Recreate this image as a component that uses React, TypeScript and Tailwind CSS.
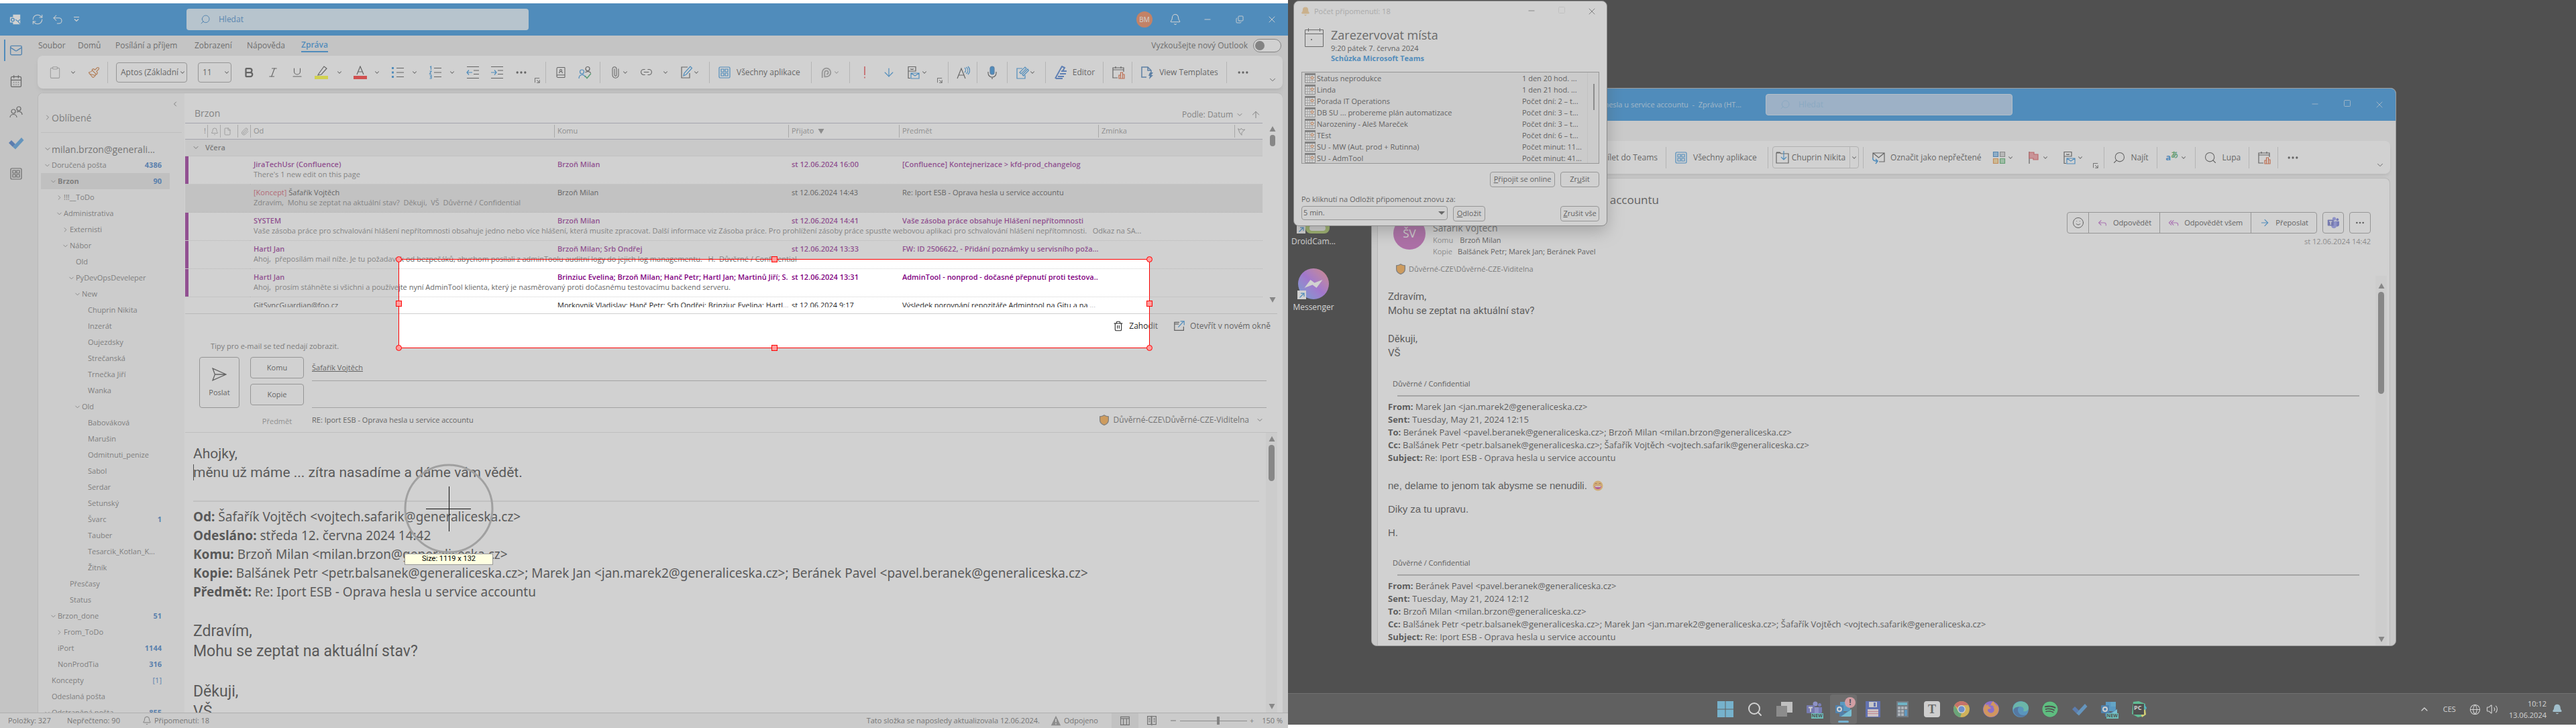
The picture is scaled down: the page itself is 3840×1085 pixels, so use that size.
import React from "react";
import {
  Bell, Bold, Italic, Underline, ChevronDown, ChevronRight, ChevronLeft, ChevronUp, Search, RefreshCw, Undo2, Minus, X, Square, Copy,
  Mail, CalendarDays, Ellipsis, Paperclip, Link2, Mic, Trash2, ArrowUp, ArrowDown, ArrowRight,
  Reply, ReplyAll, Smile, Clipboard, Paintbrush, BookUser, Volume2, Globe, File,
} from "lucide-react";
import { FaFirefoxBrowser, FaSpotify } from "react-icons/fa";

type P = { children?: React.ReactNode; className?: string };

const Svg = ({ children, className = "size-5" }: P) => (
  <svg viewBox="0 0 20 20" fill="none" stroke="currentColor" strokeWidth="1.2" className={`shrink-0 ${className}`} aria-hidden="true">{children}</svg>
);

const Ib = ({ children, className = "", label }: P & { label: string }) => (
  <button aria-label={label} className={`flex size-5 shrink-0 items-center justify-center ${className}`}>{children}</button>
);
const Chev = ({ className = "" }: P) => (
  <button aria-label="Další možnosti" className={`flex w-2.5 shrink-0 items-center justify-center ${className}`}><ChevronDown className="size-2.5" strokeWidth={2.5} /></button>
);
const Div = ({ className = "" }: P) => <span className={`h-8 w-px shrink-0 bg-[#c8c8c8] ${className}`} />;
const Launcher = ({ className = "" }: P) => (
  <button aria-label="Dialogové okno" className={`mb-2 shrink-0 self-end ${className}`}><Svg className="size-2"><path strokeWidth="2.4" d="M1 18V1h17M8 8l10 10M18 8v10H8" /></Svg></button>
);

const AppsIcon = ({ className = "size-5 text-[#0078d4]" }: P) => (
  <Svg className={className}><rect x="2" y="2" width="16" height="16" rx="1.5" /><path d="M5 5h4v4H5zM11 5h4v4h-4zM5 11h4v4H5zM11 11h4v4h-4z" /></Svg>
);
const FileMail = () => (
  <Svg><path d="M13 1.500H3v17h3M3 8h11V1.500h-3M7 4v1.500h3V4" /><path stroke="#0078d4" fill="#fff" d="M7 11h12v8H7zM7 11l6 4 6-4" /></Svg>
);
const CalChart = () => (
  <Svg><path d="M9 18H2V3h16v6M2 6h16M6 1v3M14 1v3" /><path stroke="#d83b01" d="M11 19v-5h2.500v5zM13.500 19v-9h3v9zM16.500 19v-6h2.500v6z" /></Svg>
);
const Shield = () => (
  <Svg className="size-4"><path fill="#f7941d" stroke="#5b5b5b" strokeWidth="1.5" d="M10 1c3 2 5 2.500 8 2.500V10c0 5-4 8-8 9.500C6 18 2 15 2 10V3.500C5 3.500 7 3 10 1z" /></Svg>
);
const TodoIcon = ({ className = "size-6" }: P) => (
  <svg viewBox="0 0 24 24" className={className} aria-hidden="true"><path fill="#185abd" d="M1 12l4-4 6 6-4 4z" /><path fill="#2b88d8" d="M7 18L20 4l3.500 4L11 21.500z" /></svg>
);
const ScrollTri = ({ down = false }: { down?: boolean }) => (
  <Svg className="size-2.5"><path fill="#6e6e6e" stroke="none" d={down ? "M1 2h18l-9 16z" : "M1 18h18L10 2z"} /></Svg>
);

/* ------------------------------------------------------------------ mail window */

const folders: { n: string; l: number; c?: string; o?: boolean }[] = [
  { n: "Doručená pošta", l: 0, c: "4386", o: true }, { n: "Brzon", l: 1, c: "90", o: true }, { n: "!!!__ToDo", l: 2, o: false },
  { n: "Administrativa", l: 2, o: true }, { n: "Externisti", l: 3, o: false }, { n: "Nábor", l: 3, o: true }, { n: "Old", l: 4 },
  { n: "PyDevOpsDeveleper", l: 4, o: true }, { n: "New", l: 5, o: true }, { n: "Chuprin Nikita", l: 6 }, { n: "Inzerát", l: 6 },
  { n: "Oujezdsky", l: 6 }, { n: "Strečanská", l: 6 }, { n: "Trnečka Jiří", l: 6 }, { n: "Wanka", l: 6 }, { n: "Old", l: 5, o: true },
  { n: "Babováková", l: 6 }, { n: "Marušin", l: 6 }, { n: "Odmitnuti_penize", l: 6 }, { n: "Sabol", l: 6 }, { n: "Serdar", l: 6 },
  { n: "Setunský", l: 6 }, { n: "Švarc", l: 6, c: "1" }, { n: "Tauber", l: 6 }, { n: "Tesarcik_Kotlan_K...", l: 6 }, { n: "Žitník", l: 6 },
  { n: "Přesčasy", l: 3 }, { n: "Status", l: 3 }, { n: "Brzon_done", l: 1, c: "51", o: true }, { n: "From_ToDo", l: 2, o: false },
  { n: "iPort", l: 1, c: "1144" }, { n: "NonProdTia", l: 1, c: "316" }, { n: "Koncepty", l: 0, c: "[1]" }, { n: "Odeslaná pošta", l: 0 },
  { n: "Odstraněná pošta", l: 0, c: "855", o: true },
];
const indent = ["pl-1", "pl-[13px]", "pl-[22px]", "pl-[31px]", "pl-10", "pl-[49px]", "pl-[58px]"];

const mails = [
  { from: "JiraTechUsr (Confluence)", to: "Brzoň Milan", at: "st 12.06.2024 16:00", sub: "[Confluence] Kontejnerizace > kfd-prod_changelog", pre: "There's 1 new edit on this page", unread: true },
  { from: "Šafařík Vojtěch", draft: true, to: "Brzoň Milan", at: "st 12.06.2024 14:43", sub: "Re: Iport ESB - Oprava hesla u service accountu", pre: "Zdravím,  Mohu se zeptat na aktuální stav?  Děkuji,  VŠ  Důvěrné / Confidential", unread: false },
  { from: "SYSTEM", to: "Brzoň Milan", at: "st 12.06.2024 14:41", sub: "Vaše zásoba práce obsahuje Hlášení nepřítomnosti", pre: "Vaše zásoba práce pro schvalování hlášení nepřítomnosti obsahuje jedno nebo více hlášení, která musíte zpracovat. Další informace viz Zásoba práce. Pro prohlížení zásoby práce spusťte webovou aplikaci pro schvalování hlášení nepřítomnosti.   Odkaz na SA...", unread: true },
  { from: "Hartl Jan", to: "Brzoň Milan; Srb Ondřej", at: "st 12.06.2024 13:33", sub: "FW: ID 2506622, - Přidání poznámky u servisního poža...", pre: "Ahoj,  přeposílám mail níže. Je tu požadavek od bezpečáků, abychom posílali z adminToolu auditní logy do jejich log managementu.   H.  Důvěrné / Confidential", unread: true },
  { from: "Hartl Jan", to: "Brinziuc Evelina; Brzoň Milan; Hanč Petr; Hartl Jan; Martinů Jiří; S...", at: "st 12.06.2024 13:31", sub: "AdminTool - nonprod - dočasné přepnutí proti testova...", pre: "Ahoj,  prosím stáhněte si všichni a používejte nyní AdminTool klienta, který je nasměrovaný proti dočasnému testovacímu backend serveru.", unread: true },
  { from: "GitSyncGuardian@foo.cz", to: "Morkovnik Vladislav; Hanč Petr; Srb Ondřej; Brinziuc Evelina; Hartl...", at: "st 12.06.2024 9:17", sub: "Výsledek porovnání repozitáře Admintool na Gitu a na ...", pre: "", unread: false },
];

const MailTitleBar = () => (
  <header className="flex h-12 shrink-0 items-center bg-[#0078d4] text-white">
    <div className="flex w-[278px] items-center pl-3.5">
      <Svg className="size-[18px]"><path fill="#fff" stroke="none" d="M6 2h12v16H6v-3h-5V6h5z" /><circle cx="5.500" cy="10.500" r="2.500" stroke="#0078d4" strokeWidth="1.6" /><path stroke="#0078d4" d="M10 10l4 3 4-3M14 13l4 5" /></Svg>
      <Ib label="Odeslat a přijmout" className="ml-3.5"><RefreshCw className="size-[18px]" strokeWidth={1.4} /></Ib>
      <Ib label="Zpět" className="ml-2.5"><Undo2 className="size-[18px]" strokeWidth={1.4} /></Ib>
      <Ib label="Přizpůsobit" className="ml-2"><Svg className="size-2.5"><path strokeWidth="2.4" d="M2 3h16M4 9l6 6 6-6" /></Svg></Ib>
    </div>
    <label className="flex h-8 w-[510px] items-center rounded bg-[#cbe5f7] pl-5 text-[#0f6cbd]">
      <Search className="size-4 -scale-x-100" strokeWidth={1.5} />
      <input aria-label="Hledat" placeholder="Hledat" className="ml-3 min-w-0 flex-1 bg-transparent text-[12px] outline-none placeholder:text-[#0f6cbd]" />
    </label>
    <div className="ml-auto flex items-center">
      <button className="mr-2.5 flex size-6 items-center justify-center rounded-full bg-[#e3642d] text-[10px]">BM</button>
      <button aria-label="Oznámení" className="flex w-12 justify-center"><Bell className="size-[18px]" strokeWidth={1.4} /></button>
      <button aria-label="Minimalizovat" className="flex w-12 justify-center"><Minus className="size-3.5" strokeWidth={1.6} /></button>
      <button aria-label="Obnovit" className="flex w-12 justify-center"><Copy className="size-3 -scale-y-100" strokeWidth={1.8} /></button>
      <button aria-label="Zavřít" className="flex w-12 justify-center"><X className="size-4" strokeWidth={1.4} /></button>
    </div>
  </header>
);

const Rail = () => (
  <nav className="flex w-14 shrink-0 flex-col gap-[18px] pt-2 text-[#333]">
    <button aria-label="Pošta" className="flex h-7 items-center gap-1.5 pl-1.5 text-[#0f6cbd]"><span className="h-8 w-0.5 bg-[#0078d4]" /><Mail className="size-5" strokeWidth={1.7} /></button>
    <button aria-label="Kalendář" className="flex h-7 items-center pl-3.5"><CalendarDays className="size-5" strokeWidth={1.5} /></button>
    <button aria-label="Lidé" className="flex h-7 items-center pl-3.5"><Svg><circle cx="6" cy="9" r="3" /><circle cx="14" cy="5" r="3" /><path d="M1 18c0-6 10-6 10 0M11 10c4-2 8 0 8 4" /></Svg></button>
    <button aria-label="To Do" className="flex h-7 items-center pl-3"><TodoIcon className="size-6" /></button>
    <button aria-label="Aplikace" className="flex h-7 items-center pl-3.5"><AppsIcon className="size-5" /></button>
  </nav>
);

const Combo = ({ value, className, label }: { value: string; className: string; label: string }) => (
  <div className={`relative shrink-0 ${className}`}>
    <select aria-label={label} className="h-[30px] w-full appearance-none rounded border border-[#8a8a8a] bg-white pr-3 pl-1.5 text-[12px]"><option>{value}</option></select>
    <ChevronDown className="pointer-events-none absolute top-2.5 right-0.5 size-2.5 bg-white" strokeWidth={2.5} />
  </div>
);

const listLines = "M8 3.500h11M8 10h11M8 16.500h11";

const MailRibbon = () => (
  <div className="mr-2 flex h-[49px] shrink-0 items-center rounded-lg bg-white text-[12px] text-[#2b2b2b] shadow-md">
    <Ib label="Vložit" className="ml-4 text-[#9a9a9a]"><Clipboard className="size-5" strokeWidth={1.3} /></Ib><Chev className="ml-3" />
    <Ib label="Kopírovat formát" className="ml-4 text-[#c5651c]"><Paintbrush className="size-[18px]" strokeWidth={1.6} /></Ib><Div className="ml-2.5" />
    <Combo label="Písmo" value="Aptos (Základní text)" className="ml-3 w-[106px]" /><Combo label="Velikost písma" value="11" className="ml-4 w-[50px]" />
    <Ib label="Tučné" className="ml-4"><Bold className="size-[18px]" strokeWidth={3} /></Ib>
    <Ib label="Kurzíva" className="ml-4"><Italic className="size-[18px]" strokeWidth={1.5} /></Ib>
    <Ib label="Podtržené" className="ml-4"><Underline className="size-[18px]" strokeWidth={1.5} /></Ib>
    <Ib label="Zvýraznění" className="ml-4"><Svg><path d="M6 12L14 1l4 3-8 9-5 1z" /><path fill="#ffff00" stroke="none" d="M0 15h20v5H0z" /></Svg></Ib><Chev className="ml-3" />
    <Ib label="Barva písma" className="ml-4"><Svg><path d="M5 13L10 1l5 12M6.500 9h7" /><path fill="#ff0000" stroke="none" d="M0 15h20v5H0z" /></Svg></Ib><Chev className="ml-2.5" />
    <Ib label="Odrážky" className="ml-4"><Svg><path d={listLines} /><path fill="#0078d4" stroke="none" d="M1 2h3v3H1zM1 8.500h3v3H1zM1 15h3v3H1z" /></Svg></Ib><Chev className="ml-2.5" />
    <Ib label="Číslování" className="ml-4"><Svg><path d={listLines} /><path stroke="#0078d4" d="M2 2l1.500-1v5M1.500 8h2.500l-2.500 4h2.500M1.500 14h2.500v5H1.500M2 16.500h2" /></Svg></Ib><Chev className="ml-2.5" />
    <Ib label="Zmenšit odsazení" className="ml-4"><Svg><path d="M1 1.500h18M11 7h8M11 12.500h8M1 18.500h18" /><path stroke="#0078d4" d="M9 10H1M4 6.500L1 10l3 3.500" /></Svg></Ib>
    <Ib label="Zvětšit odsazení" className="ml-4"><Svg><path d="M1 1.500h18M11 7h8M11 12.500h8M1 18.500h18" /><path stroke="#0078d4" d="M1 10h8M6 6.500L9 10l-3 3.500" /></Svg></Ib>
    <Ib label="Další" className="ml-4"><Ellipsis className="size-5" /></Ib><Launcher className="ml-2.5" /><Div className="ml-2" />
    <Ib label="Adresář" className="ml-3"><BookUser className="size-[18px]" strokeWidth={1.4} /></Ib>
    <Ib label="Kontrola jmen" className="ml-4"><Svg><circle cx="14" cy="4.500" r="3" /><path d="M10.500 10c2-2 7-2 8 1" /><path stroke="#0078d4" d="M1 19c0-7 9-7 9-2M8.500 9a3 3 0 1 1-6 0 3 3 0 0 1 6 0z" /><path stroke="#1a9a4a" strokeWidth="1.500" d="M10 15l3 3.500 6-7" /></Svg></Ib><Div className="ml-3" />
    <Ib label="Připojit soubor" className="ml-3"><Paperclip className="size-[18px] -rotate-45" strokeWidth={1.4} /></Ib><Chev />
    <Ib label="Odkaz" className="ml-4"><Link2 className="size-[19px]" strokeWidth={1.4} /></Ib><Chev className="ml-3.5" />
    <Ib label="Podpis" className="ml-4"><Svg><path d="M12 2H3v16h12v-7" /><path stroke="#0078d4" d="M6 15l1-4L16 1l2.500 2.500L10 13z" /></Svg></Ib><Chev /><Div className="ml-3.5" />
    <button className="ml-3 flex items-center gap-2"><AppsIcon />Všechny aplikace</button><Div className="ml-4" />
    <Ib label="Loop" className="ml-3 text-[#8a8a8a]"><Svg className="size-[18px]"><path strokeWidth="2" d="M3 19v-9a7 7 0 1 1 7 7H7v-7a3 3 0 1 1 3 3" /></Svg></Ib><Chev className="text-[#8a8a8a]" /><Div className="ml-3.5" />
    <Ib label="Vysoká důležitost" className="ml-3 text-[#e8252b]"><Svg><path strokeWidth="1.600" d="M10 1v13M10 16.500v2" /></Svg></Ib>
    <Ib label="Nízká důležitost" className="ml-4 text-[#0078d4]"><ArrowDown className="size-5" strokeWidth={1.4} /></Ib>
    <Ib label="Uložit kopii" className="ml-4"><FileMail /></Ib><Chev className="ml-0.5" /><Launcher className="ml-3.5" /><Div className="ml-2" />
    <Ib label="Číst nahlas" className="ml-3"><Svg><path d="M1 19L7 4l6 15M3 14h8" /><path stroke="#0078d4" d="M12 3c2 2 2 5 0 7M14.500 2c3 3 3 7 0 10M17 1c3.500 4 3.500 8 0 12" /></Svg></Ib><Div className="ml-2.5" />
    <Ib label="Diktovat" className="ml-3"><Svg><rect x="7" y="1" width="6" height="12" rx="3" fill="#0078d4" stroke="#1b5fa8" /><path d="M4 9v2a6 6 0 0 0 12 0V9M10 17v3" /></Svg></Ib><Div className="ml-3" />
    <Ib label="Šablony" className="ml-3 text-[#0078d4]"><Svg><path d="M10 4H2v15h12v-5" /><path d="M6 10l8-8 2 2-8 8zM10 13l8-8 1.500 2-8 8z" /></Svg></Ib><Chev /><Div className="ml-3.5" />
    <button className="ml-3 flex items-center gap-2"><Svg><path stroke="#2160c4" strokeWidth="2" d="M2 19L12 1l4 2-3 5M11 8h8M9 12h9M6 16h9M3 19h10" /></Svg>Editor</button><Div className="ml-3" />
    <Ib label="Plánování" className="ml-3"><CalChart /></Ib><Div className="ml-2.5" />
    <button className="ml-3 flex items-center gap-2"><Svg><path stroke="#1b5fa8" strokeWidth="1.500" d="M9 17H2V2h9l5 5v3M11 2v5h5" /><path fill="#1b5fa8" stroke="none" d="M14 10h5l-3 4h3l-6 6 1-5h-2z" /></Svg>View Templates</button><Div className="ml-3" />
    <Ib label="Další příkazy" className="ml-3.5"><Ellipsis className="size-5" /></Ib>
    <button aria-label="Sbalit pás karet" className="mr-2 mb-1.5 ml-auto self-end"><ChevronDown className="size-3.5" strokeWidth={1.6} /></button>
  </div>
);

const FolderPane = () => (
  <aside className="w-[218px] shrink-0 overflow-hidden bg-[#f5f5f5] text-[11px] text-[#5b5b5b]">
    <div className="flex h-[22px] items-end justify-end pr-2"><ChevronLeft className="size-3" strokeWidth={2} /></div>
    <button className="flex h-7 w-full items-center pl-2 text-[14px]"><ChevronRight className="size-3" strokeWidth={1.8} />Oblíbené</button>
    <hr className="mx-1 mt-2 border-[#dcdcdc]" />
    <button className="mt-3 flex h-6 w-full items-center pl-2 text-[14px] text-[#4a4a4a]"><ChevronDown className="size-3" strokeWidth={1.8} />milan.brzon@generali...</button>
    <ul>
      {folders.map((f, i) => (
        <li key={i}>
          <button className={`ml-1 flex h-6 w-48 items-center ${indent[f.l]} ${i === 1 ? "bg-[#dddddd] font-bold" : ""}`}>
            <span className="w-3 shrink-0">{f.o === undefined ? null : f.o ? <ChevronDown className="size-[11px]" strokeWidth={1.8} /> : <ChevronRight className="size-[11px]" strokeWidth={1.8} />}</span>
            <span className="whitespace-nowrap">{f.n}</span>
            {f.c && <span className={`mr-3 ml-auto text-[#0f5fb8] ${f.c === "[1]" ? "" : "font-bold"}`}>{f.c}</span>}
          </button>
        </li>
      ))}
    </ul>
  </aside>
);

const Th = ({ children, className = "" }: P) => (
  <th className={`border-y border-[#a9a9bb] p-0 py-px font-normal ${className}`}><span className="flex h-[19px] items-center border-l border-[#b0b0b0] pl-1">{children}</span></th>
);

const MailList = () => (
  <div className="flex h-[275px] shrink-0 overflow-hidden">
    <div className="min-w-0 flex-1">
      <table className="w-full table-fixed border-separate border-spacing-0 text-left text-[11px]">
        <colgroup><col className="w-[33px]" /><col className="w-[19px]" /><col className="w-[26px]" /><col className="w-[19px]" /><col /><col className="w-[349px]" /><col className="w-[165px]" /><col className="w-[297px]" /><col className="w-[203px]" /><col className="w-[42px]" /></colgroup>
        <thead className="text-[#7d7d7d]">
          <tr className="h-[25px]">
            <th className="border-y border-[#a9a9bb] p-0 pr-0.5 text-right font-normal">!</th>
            <Th><Bell className="size-3" strokeWidth={1.5} /></Th><Th><File className="size-3" strokeWidth={1.5} /></Th><Th><Paperclip className="size-3" strokeWidth={1.5} /></Th>
            <Th>Od</Th><Th>Komu</Th><Th>Přijato<Svg className="ml-1.5 size-2.5"><path fill="#777" stroke="none" d="M1 2h18l-9 15z" /></Svg></Th><Th>Předmět</Th><Th>Zmínka</Th>
            <Th><Svg className="size-3"><path strokeWidth="1.600" d="M1 3l4 10 5 6V13l8-8-6 1-3-4-3 4z" /></Svg></Th>
          </tr>
        </thead>
        <tbody>
          <tr className="h-[25px]"><th colSpan={10} className="border-b border-[#dedede] bg-[#f0f0f0] p-0 font-semibold text-[#555]"><span className="flex items-center pl-2.5"><ChevronDown className="mr-2 size-3" strokeWidth={2} />Včera</span></th></tr>
          {mails.map((m, i) => {
            const bg = i === 1 ? "bg-[#e1e1e1]" : "";
            const c = `p-0 pl-[5px] align-bottom leading-4 whitespace-nowrap overflow-hidden ${bg} ${m.unread ? "font-semibold text-[#800080]" : "text-[#262626]"}`;
            return (
              <React.Fragment key={i}>
                <tr className="h-5">
                  <td rowSpan={2} colSpan={4} className={`h-[42px] border-b border-dotted border-[#cfcfcf] p-0 ${bg}`}><div className={`h-[41px] w-[5px] ${m.unread ? "bg-[#800080]" : ""}`} /></td>
                  <td className={c}>{m.draft && <span className="text-[#c4314b]">[Koncept] </span>}{m.from}</td>
                  <td className={c}>{m.to}</td><td className={c}>{m.at}</td><td className={c}>{m.sub}</td><td className={c} /><td className={c} />
                </tr>
                <tr className="h-[22px]"><td colSpan={6} className={`overflow-hidden border-b border-dotted border-[#cfcfcf] p-0 pl-[5px] align-top leading-[14px] whitespace-pre text-[#666] ${bg}`}>{m.pre}</td></tr>
              </React.Fragment>
            );
          })}
        </tbody>
      </table>
    </div>
    <div className="flex w-[22px] flex-col items-center pt-1 pb-1.5 pl-2">
      <ScrollTri /><span className="mt-1 h-[17px] w-2 rounded-full bg-[#6e6e6e]" /><span className="mt-auto"><ScrollTri down /></span>
    </div>
  </div>
);

const L = ({ k, children }: { k: string; children: React.ReactNode }) => <p className="whitespace-nowrap"><b>{k}</b> {children}</p>;

const Compose = () => (
  <section className="mt-[9px] flex min-h-0 flex-1 flex-col border-t border-[#d0d0d0] text-[#262626]">
    <div className="flex h-9 items-center justify-end gap-6 pr-2.5 text-[12px]">
      <button className="flex items-center gap-2"><Trash2 className="size-4" strokeWidth={1.6} />Zahodit</button>
      <button className="flex items-center gap-2"><Svg className="size-4"><path strokeWidth="1.500" d="M10 3H1v15h17v-7M1 6h8" /><path stroke="#0078d4" strokeWidth="1.500" d="M8 12L18 1M12 1h7v7" /></Svg>Otevřít v novém okně</button>
    </div>
    <p className="mt-1 pl-[38px] text-[11px] leading-4 text-[#555]">Tipy pro e-mail se teď nedají zobrazit.</p>
    <div className="mt-2 flex pl-[21px] text-[11px]">
      <button className="flex h-[76px] w-[60px] flex-col items-center justify-center gap-2 rounded border border-[#8a8a8a]"><Svg className="size-[22px]"><path d="M1 2l18 8-18 8 3-8zM4 10h15" /></Svg>Poslat</button>
      <div className="ml-4 flex w-20 flex-col gap-2 text-center">
        <button className="h-8 rounded border border-[#8a8a8a]">Komu</button>
        <button className="h-8 rounded border border-[#8a8a8a]">Kopie</button>
        <label htmlFor="subject" className="leading-8 text-[#7d7d7d]">Předmět</label>
      </div>
      <div className="mr-4 ml-3 flex flex-1 flex-col">
        <div className="h-9 border-b border-[#a5a5a5] leading-8"><a href="#komu" className="underline">Šafařík Vojtěch</a></div>
        <input aria-label="Kopie" className="h-10 border-b border-[#a5a5a5] bg-transparent" />
        <div className="flex h-9 items-center">
          <input id="subject" defaultValue="RE: Iport ESB - Oprava hesla u service accountu" className="flex-1 bg-transparent" />
          <button className="mr-1 flex items-center gap-1.5 text-[12px] text-[#444]"><Shield />Důvěrné-CZE\Důvěrné-CZE-Viditelna<ChevronDown className="ml-1 size-3" strokeWidth={1.8} /></button>
        </div>
      </div>
    </div>
    <div className="flex min-h-0 flex-1 border-t border-[#dcdcdc]">
      <article className="min-w-0 flex-1 overflow-hidden pt-[17px] pl-3 text-[#111]">
        <div className="font-[Roboto] text-[21px] leading-7"><p>Ahojky,</p><p><span className="-mr-px border-l border-black" />měnu už máme ... zítra nasadíme a dáme vám vědět.</p></div>
        <hr className="mt-7 mr-2.5 border-t-2 border-[#e0e0e0]" />
        <div className="mt-2 font-['Noto_Sans'] text-[19px] leading-7">
          <L k="Od:">Šafařík Vojtěch &lt;vojtech.safarik@generaliceska.cz&gt;</L>
          <L k="Odesláno:">středa 12. června 2024 14:42</L>
          <L k="Komu:">Brzoň Milan &lt;milan.brzon@generaliceska.cz&gt;</L>
          <L k="Kopie:">Balšánek Petr &lt;petr.balsanek@generaliceska.cz&gt;; Marek Jan &lt;jan.marek2@generaliceska.cz&gt;; Beránek Pavel &lt;pavel.beranek@generaliceska.cz&gt;</L>
          <L k="Předmět:">Re: Iport ESB - Oprava hesla u service accountu</L>
        </div>
        <div className="mt-[30px] font-[Roboto] text-[23px] leading-[30px]"><p>Zdravím,</p><p>Mohu se zeptat na aktuální stav?</p><p className="mt-[30px]">Děkuji,</p><p>VŠ</p></div>
      </article>
      <div className="flex w-[17px] flex-col items-center bg-[#f5f5f5] py-1"><ScrollTri /><span className="mt-1 h-[54px] w-[9px] rounded-full bg-[#6e6e6e]" /><span className="mt-auto"><ScrollTri down /></span></div>
    </div>
  </section>
);

const StatusBar = () => (
  <footer className="flex h-[23px] shrink-0 items-center border-t border-[#bdbdbd] bg-[#f3f3f3] text-[11px] text-[#4a4a4a]">
    <span className="w-[100px] pl-3">Položky: 327</span><span className="w-[112px]">Nepřečteno: 90</span>
    <Bell className="size-3.5" strokeWidth={1.5} /><span className="ml-1">Připomenutí: 18</span>
    <span className="ml-auto">Tato složka se naposledy aktualizovala 12.06.2024.</span>
    <Svg className="ml-4 size-4"><path fill="#777" stroke="none" d="M10 1l9 18H1z" /><path stroke="#fff" strokeWidth="2" d="M10 7v6M10 15v2" /></Svg><span className="mr-5 ml-1">Odpojeno</span>
    <button aria-label="Normální zobrazení" className="flex h-[22px] w-10 items-center justify-center bg-[#e1e1e1]"><Svg className="size-4"><path strokeWidth="1.500" d="M2 3h16v15H2zM2 6h16M7 6v12M13 6v12" /></Svg></button>
    <button aria-label="Čtení" className="flex w-10 justify-center"><Svg className="size-4"><path strokeWidth="1.500" d="M2 2h7v15H2zM11 2h7v15h-7M10 1v18M4 6h3M4 9h3M4 12h3M13 6h3M13 9h3M13 12h3" /></Svg></button>
    <button aria-label="Oddálit" className="ml-1.5"><Minus className="size-3" /></button>
    <input type="range" aria-label="Lupa" defaultValue="57" className="mx-1 h-px w-[100px] appearance-none bg-[#777] [&::-webkit-slider-thumb]:h-3 [&::-webkit-slider-thumb]:w-1 [&::-webkit-slider-thumb]:appearance-none [&::-webkit-slider-thumb]:bg-[#666]" />
    <button aria-label="Přiblížit">+</button><span className="mr-2 ml-3">150 %</span>
  </footer>
);

const handle = "absolute size-[9px] border border-[#ff0000] bg-[#ff9c9c]";
const Capture = () => (
  <div className="pointer-events-none absolute top-[381px] left-[594px] h-[133px] w-[1120px] border border-[#ff0000] shadow-[0_0_0_4000px_rgba(162,162,162,0.494)]">
    <i className={`${handle} -top-[5px] -left-[5px] rounded-full`} /><i className={`${handle} -top-[5px] -right-[5px] rounded-full`} />
    <i className={`${handle} -bottom-[5px] -left-[5px] rounded-full`} /><i className={`${handle} -right-[5px] -bottom-[5px] rounded-full`} />
    <i className={`${handle} -top-[5px] left-[555px]`} /><i className={`${handle} -bottom-[5px] left-[555px]`} />
    <i className={`${handle} top-[61px] -left-[5px]`} /><i className={`${handle} top-[61px] -right-[5px]`} />
    <svg viewBox="0 0 134 134" className="absolute top-[304px] left-[7px] size-[134px]" fill="none"><circle cx="67" cy="67" r="65" stroke="#a0a0a0" strokeWidth="3" /><path stroke="#111" d="M33 67.500h67M67.500 34v67" /></svg>
    <div className="absolute top-[438px] left-[8px] flex h-[17px] w-[132px] items-center justify-center border border-[#9b9b9b] bg-[#ffffe1] font-[Roboto] text-[11px] text-black">Size: 1119 x 132</div>
  </div>
);

const tabs = ["Soubor", "Domů", "Posílání a příjem", "Zobrazení", "Nápověda"];
const tabW = ["w-[59px]", "w-14", "w-[118px]", "w-[78px]", "w-[81px]"];

const LeftScreen = () => (
  <div className="flex min-w-0 flex-1 flex-col pt-[5px]">
    <div className="relative flex min-h-0 flex-1 flex-col overflow-hidden bg-[#e5e5e5]">
      <MailTitleBar />
      <div className="flex min-h-0 flex-1">
        <Rail />
        <div className="flex min-w-0 flex-1 flex-col">
          <div className="flex h-[30px] shrink-0 items-center pl-px text-[12px] text-[#3a3a3a]">
            {tabs.map((t, i) => <button key={t} className={`text-left ${tabW[i]}`}>{t}</button>)}
            <button className="border-b-2 border-[#0078d4] font-semibold text-[#0078d4]">Zpráva</button>
            <label htmlFor="newOutlook" className="mr-2 ml-auto">Vyzkoušejte nový Outlook</label>
            <button id="newOutlook" role="switch" aria-checked="false" className="mr-2.5 flex h-5 w-[42px] items-center rounded-full border border-[#666] bg-white pl-0.5"><span className="size-3.5 rounded-full bg-[#666]" /></button>
          </div>
          <MailRibbon />
          <div className="mt-1.5 mr-2 flex min-h-0 flex-1 overflow-hidden rounded-t-lg border-t border-l border-[#cfcfcf] bg-white">
            <FolderPane />
            <main className="flex min-w-0 flex-1 flex-col pr-2 pl-px">
              <div className="flex h-11 shrink-0 items-end pb-1 pl-3.5 text-[14px] text-[#666]">
                <h1 className="leading-5">Brzon</h1>
                <button className="ml-auto flex items-center gap-1 text-[12px] leading-4">Podle: Datum <ChevronDown className="size-3" strokeWidth={2} /></button>
                <button aria-label="Řadit vzestupně" className="mr-6 ml-2.5"><ArrowUp className="size-4" strokeWidth={1.5} /></button>
              </div>
              <MailList />
              <Compose />
            </main>
          </div>
        </div>
      </div>
      <StatusBar />
      <Capture />
    </div>
  </div>
);

/* ------------------------------------------------------------------ desktop */

const reminders = [
  ["Status neprodukce", "1 den 20 hod. ..."], ["Linda", "1 den 21 hod. ..."], ["Porada IT Operations", "Počet dní: 2 – t..."],
  ["DB SU ... probereme plán automatizace", "Počet dní: 3 – t..."], ["Narozeniny - Aleš Mareček", "Počet dní: 3 – t..."], ["TEst", "Počet dní: 6 – t..."],
  ["SU - MW (Aut. prod + Rutinna)", "Počet minut: 11..."], ["SU - AdmTool", "Počet minut: 41..."],
];
const btn = "rounded border border-[#8a8a8a] bg-[#fdfdfd]";

const Reminders = () => (
  <section className="absolute top-px left-2 flex h-[336px] w-[468px] flex-col overflow-hidden rounded-lg border border-[#777] bg-white text-[11px] text-[#222] shadow-[0_8px_24px_rgba(0,0,0,0.35)]">
    <div className="flex h-[30px] shrink-0 items-center pl-2.5 text-[#b2b2b2]">
      <Bell className="size-3.5 text-[#f2c078]" fill="#f2c078" /><h2 className="ml-1.5 text-[11px]">Počet připomenutí: 18</h2>
      <div className="ml-auto flex text-[#555]">
        <button aria-label="Minimalizovat" className="flex w-[45px] justify-center"><Minus className="size-3.5" strokeWidth={1.4} /></button>
        <button aria-label="Maximalizovat" className="flex w-[45px] justify-center text-[#e0e0e0]"><Square className="size-3" /></button>
        <button aria-label="Zavřít" className="flex w-[45px] justify-center"><X className="size-4" strokeWidth={1.4} /></button>
      </div>
    </div>
    <div className="flex pt-2 pl-4">
      <svg viewBox="0 0 28 28" className="mt-0.5 size-7" fill="none" stroke="#333" aria-hidden="true"><path d="M.5 2.500h27v25H.5zM.5 8.500h27M5.500 0v5M22.500 0v5" /><path fill="#333" d="M9.500 16.500h1v1h-1z" /></svg>
      <div className="ml-[11px]"><h3 className="text-[18px] leading-6 text-[#333]">Zarezervovat místa</h3><p className="leading-[15px]">9:20 pátek 7. června 2024</p><a href="#teams" className="block leading-4 font-bold text-[#0078d4]">Schůzka Microsoft Teams</a></div>
    </div>
    <div className="mx-[11px] mt-3 flex h-[137px] shrink-0 overflow-hidden border border-[#8a8a8a] bg-[#f3f3f3]">
      <table className="flex-1"><tbody>
        {reminders.map(([a, b]) => (
          <tr key={a} className="h-[17px]">
            <td className="w-[22px] p-0 pl-1"><svg viewBox="0 0 16 15" className="h-[15px] w-4" aria-hidden="true"><path fill="#fff" stroke="#777" d="M.5.500h15v14H.5z" /><path stroke="#aaa" d="M4 3v11M7.500 3v11M11 3v11M1 6.500h14M1 10.500h14" /><path fill="#666" d="M0 0h16v3H0z" /><path fill="#fff" stroke="#e0691a" d="M9.500 5.500h3v3h-3z" /></svg></td>
            <td className="p-0 leading-4 whitespace-nowrap">{a}</td><td className="w-[97px] p-0 leading-4 whitespace-nowrap">{b}</td>
          </tr>
        ))}
      </tbody></table>
      <div className="w-[17px] border-l border-[#e2e2e2] pt-[17px] pl-2"><div className="h-[39px] w-0.5 bg-[#777]" /></div>
    </div>
    <div className="mt-3 flex justify-end gap-2 pr-[11px]"><button className={`${btn} h-[23px] w-[97px]`}><u>P</u>řipojit se online</button><button className={`${btn} h-[23px] w-[58px]`}>Zr<u>u</u>šit</button></div>
    <label htmlFor="snooze" className="mt-2.5 pl-[11px] leading-4">Po kliknutí na Odložit připomenout znovu za:</label>
    <div className="mt-0.5 flex items-start px-[11px]">
      <div className="relative w-[218px]"><select id="snooze" className={`${btn} h-[21px] w-full appearance-none pl-0.5`}><option>5 min.</option></select><Svg className="pointer-events-none absolute top-1.5 right-1 size-2.5"><path fill="#333" stroke="none" d="M0 4h20L10 14z" /></Svg></div>
      <button className={`${btn} ml-2 h-[23px] w-12`}><u>O</u>dložit</button><button className={`${btn} ml-auto h-[23px] w-[58px]`}><u>Z</u>rušit vše</button>
    </div>
  </section>
);

const MessageRibbon = () => (
  <div className="mr-2 flex h-[49px] shrink-0 items-center rounded-lg bg-white text-[12px] text-[#2b2b2b] shadow-md">
    <button className="w-[418px] text-right">Sdílet do Teams</button><Div className="ml-3" />
    <button className="ml-3 flex items-center gap-2"><AppsIcon />Všechny aplikace</button><Div className="ml-4" />
    <div className="ml-1.5 flex h-[33px] items-center rounded border border-[#c0c0c0] pl-1">
      <button className="flex items-center gap-1"><Svg><path d="M7 3H1v15h18V4H8L6 2H1M1 3v2" /><path stroke="#0078d4" d="M12 0v13M8 9l4 4 4-4" /></Svg>Chuprin Nikita</button>
      <span className="ml-1.5 h-full w-px bg-[#c8c8c8]" /><Chev className="mx-px" />
    </div><Div className="ml-1.5" />
    <button className="ml-3 flex items-center gap-2"><Svg><path d="M2 10V3h17v13h-8M2 3l8.500 7L19 3" /><path stroke="#0078d4" strokeWidth="1.500" d="M2 10c-1 4 2 5 7 5M6 12l3 3-3 4" /></Svg>Označit jako nepřečtené</button>
    <Ib label="Kategorizovat" className="ml-4"><Svg><path fill="#7db8ea" stroke="#0f6cbd" d="M1.500 1.500h7v7h-7z" /><path fill="#ccc" stroke="#777" d="M11.500 1.500h7v7h-7z" /><path fill="#f8d080" stroke="#e07a1a" d="M1.500 11.500h7v7h-7z" /><path fill="#9ad8a8" stroke="#2a9a4a" d="M11.500 11.500h7v7h-7z" /></Svg></Ib><Chev className="ml-0.5" />
    <Ib label="Zpracovat" className="ml-5"><Svg><path d="M3 1v18" /><path fill="#f0848c" stroke="#d13438" d="M3 2h7v3h6v8H9v-2H3z" /></Svg></Ib><Chev className="ml-0.5" />
    <Ib label="Přesunout" className="ml-5"><FileMail /></Ib><Chev className="ml-0.5" /><Launcher className="ml-3.5" /><Div className="ml-2" />
    <button className="ml-3 flex items-center gap-2"><Search className="size-5 -scale-x-100" strokeWidth={1.3} />Najít</button><Div className="ml-3" />
    <Ib label="Přeložit" className="ml-3"><span className="text-[13px] font-bold text-[#0078d4]">a</span><span className="mb-2 font-['Noto_Sans_CJK_JP',sans-serif] text-[11px] font-bold text-[#2a9a4a]">あ</span></Ib><Chev className="ml-0.5" /><Div className="ml-3" />
    <button className="ml-3 flex items-center gap-2"><Search className="size-5" strokeWidth={1.3} />Lupa</button><Div className="ml-3" />
    <Ib label="Plánování" className="ml-3"><CalChart /></Ib><Div className="ml-2.5" /><Ib label="Další" className="ml-3"><Ellipsis className="size-5" /></Ib>
    <button aria-label="Sbalit pás karet" className="mr-2 mb-1.5 ml-auto self-end"><ChevronDown className="size-3.5" strokeWidth={1.6} /></button>
  </div>
);

const act = "flex items-center gap-2 px-3";
const TeamsIcon = ({ className = "size-[18px]" }: P) => (
  <svg viewBox="0 0 24 24" className={className} aria-hidden="true"><circle cx="14" cy="4" r="3.500" fill="#7b83eb" /><circle cx="20.500" cy="5.500" r="2.500" fill="#5059c9" /><path fill="#5059c9" d="M16 9h8v7a4 4 0 0 1-6 3z" /><path fill="#7b83eb" d="M8 9h11v8c0 8-11 8-11 0z" /><rect x="1" y="6" width="12" height="12" rx="1" fill="#4b53bc" /><path fill="none" stroke="#fff" strokeWidth="1.800" d="M4 9.500h6M7 9.500V16" /></svg>
);

const Confidential = () => (<><p className="mt-[27px] pl-[7px] text-[11px] leading-4">Důvěrné / Confidential</p><hr className="mt-[9px] mr-4 ml-3.5 border-t-2 border-[#a8a8a8]" /></>);

const MessageWindow = () => (
  <section className="absolute top-[131px] left-[124px] flex h-[832px] w-[1528px] flex-col overflow-hidden rounded-lg border border-[#999] bg-[#f0f0f0] text-[#222]">
    <header className="flex h-12 shrink-0 items-center bg-[#0078d4] text-[12px] text-[#a8cdec]">
      <span className="w-[551px] text-right text-[11px] whitespace-pre">Re: Iport ESB - Oprava hesla u service accountu  -  Zpráva (HT...</span>
      <label className="ml-9 flex h-8 w-[368px] items-center rounded border border-[#c3d9ee] bg-[#98c0ea] pl-5 text-[#74b0e0]">
        <Search className="size-4 -scale-x-100" strokeWidth={1.5} /><input aria-label="Hledat" placeholder="Hledat" className="ml-3 min-w-0 flex-1 bg-transparent placeholder:text-[#74b0e0]" />
      </label>
      <div className="ml-auto flex">
        <button aria-label="Minimalizovat" className="flex w-12 justify-center"><Minus className="size-3.5" strokeWidth={1.5} /></button>
        <button aria-label="Maximalizovat" className="flex w-12 justify-center"><Square className="size-3" strokeWidth={1.8} /></button>
        <button aria-label="Zavřít" className="flex w-12 justify-center"><X className="size-4" strokeWidth={1.4} /></button>
      </div>
    </header>
    <div className="flex min-h-0 flex-1 flex-col pt-[30px] pl-2">
      <MessageRibbon />
      <div className="mt-1.5 mr-2 flex min-h-0 flex-1 flex-col rounded-t-lg border border-b-0 border-[#cfcfcf] bg-white pt-5 pl-[15px]">
        <h2 className="w-[404px] text-right text-[17px] leading-6 whitespace-nowrap">Re: Iport ESB - Oprava hesla u service accountu</h2>
        <div className="mt-1.5 flex pr-7">
          <div className="mt-2 ml-2 flex size-12 items-center justify-center rounded-full bg-[#b83fab] text-[17px] text-white">ŠV</div>
          <div className="mt-[15px] ml-[11px] text-[11px] leading-[17px]"><p className="text-[14px] leading-[18px] text-[#444]">Šafařík Vojtěch</p><p><span className="mr-2.5 text-[#777]">Komu</span>Brzoň Milan</p><p><span className="mr-2 text-[#777]">Kopie</span>Balšánek Petr; Marek Jan; Beránek Pavel</p></div>
          <div className="ml-auto text-[11px]">
            <div className="flex h-8 gap-2">
              <div className="flex divide-x divide-[#8a8a8a] rounded border border-[#8a8a8a]">
                <button aria-label="Reagovat" className="flex w-8 items-center justify-center"><Smile className="size-[18px]" strokeWidth={1.3} /></button>
                <button className={act}><Reply className="size-4 text-[#b146c2]" strokeWidth={1.6} />Odpovědět</button>
                <button className={act}><ReplyAll className="size-4 text-[#b146c2]" strokeWidth={1.6} />Odpovědět všem</button>
                <button className={act}><ArrowRight className="size-4 text-[#0078d4]" strokeWidth={1.6} />Přeposlat</button>
              </div>
              <button aria-label="Teams" className="flex w-8 items-center justify-center rounded border border-[#8a8a8a]"><TeamsIcon /></button>
              <button aria-label="Další akce" className="flex w-8 items-center justify-center rounded border border-[#8a8a8a]"><Ellipsis className="size-4" /></button>
            </div>
            <p className="mt-1 text-right leading-4 text-[#777]">st 12.06.2024 14:42</p>
          </div>
        </div>
        <p className="mt-2 flex h-5 shrink-0 items-center gap-1 pl-[11px] text-[11px] text-[#555]"><Shield />Důvěrné-CZE\Důvěrné-CZE-Viditelna</p>
        <div className="flex min-h-0 flex-1">
          <article className="min-w-0 flex-1 overflow-hidden pt-[21px] pr-2 text-[13px] leading-[19px] text-[#161616]">
            <div className="font-[Roboto] text-[15px] leading-[21px]"><p>Zdravím,</p><p>Mohu se zeptat na aktuální stav?</p><p className="mt-[21px]">Děkuji,</p><p>VŠ</p></div>
            <Confidential />
            <div className="mt-1.5">
              <L k="From:">Marek Jan &lt;jan.marek2@generaliceska.cz&gt;</L><L k="Sent:">Tuesday, May 21, 2024 12:15</L>
              <L k="To:">Beránek Pavel &lt;pavel.beranek@generaliceska.cz&gt;; Brzoň Milan &lt;milan.brzon@generaliceska.cz&gt;</L>
              <L k="Cc:">Balšánek Petr &lt;petr.balsanek@generaliceska.cz&gt;; Šafařík Vojtěch &lt;vojtech.safarik@generaliceska.cz&gt;</L>
              <L k="Subject:">Re: Iport ESB - Oprava hesla u service accountu</L>
            </div>
            <div className="mt-[22px] flex flex-col gap-[15px] font-['Liberation_Sans',sans-serif] text-[15px] leading-5">
              <p className="flex items-center gap-2">ne, delame to jenom tak abysme se nenudili.<svg viewBox="0 0 16 16" className="size-4" role="img" aria-label="smích"><circle cx="8" cy="8" r="7.500" fill="#ffb84d" /><path fill="#c2188f" d="M3 8.500h10c0 6-10 6-10 0z" /><path fill="#fff" d="M4 8.500h8v1.500H4z" /><path fill="none" stroke="#8a3a10" d="M3.500 5.500c1-1.500 2-1.500 3 0M9.500 5.500c1-1.500 2-1.500 3 0" /></svg></p>
              <p>Diky za tu upravu.</p><p>H.</p>
            </div>
            <Confidential />
            <div className="mt-1.5">
              <L k="From:">Beránek Pavel &lt;pavel.beranek@generaliceska.cz&gt;</L><L k="Sent:">Tuesday, May 21, 2024 12:12</L>
              <L k="To:">Brzoň Milan &lt;milan.brzon@generaliceska.cz&gt;</L>
              <L k="Cc:">Balšánek Petr &lt;petr.balsanek@generaliceska.cz&gt;; Marek Jan &lt;jan.marek2@generaliceska.cz&gt;; Šafařík Vojtěch &lt;vojtech.safarik@generaliceska.cz&gt;</L>
              <L k="Subject:">Re: Iport ESB - Oprava hesla u service accountu</L>
            </div>
          </article>
          <div className="mr-1 flex w-[17px] flex-col items-center bg-[#f8f8f8] pt-2.5 pb-1"><ScrollTri /><span className="mt-1 h-[152px] w-[9px] rounded-full bg-[#6e6e6e]" /><span className="mt-auto"><ScrollTri down /></span></div>
        </div>
      </div>
    </div>
  </section>
);

const OutlookIcon = () => (
  <svg viewBox="0 0 24 24" className="size-6" aria-hidden="true"><path fill="#1490df" d="M7 1h15v14H7z" /><path fill="#28a8ea" d="M14.500 1H22v7h-7.500z" /><path fill="#0a62b0" d="M6 12l8 5 10-5v9a2 2 0 0 1-2 2H6z" /><path fill="#50d9ff" d="M24 12L8 23h14a2 2 0 0 0 2-2z" /><rect y="6" width="12" height="12" rx="1" fill="#0364b8" /><circle cx="6" cy="12" r="3" fill="none" stroke="#fff" strokeWidth="2" /></svg>
);
const TaskItem = ({ label, active, children }: P & { label: string; active?: boolean }) => (
  <button aria-label={label} className={`relative flex h-11 w-10 items-center justify-center rounded ${active ? "bg-[#3a3a3a]" : ""}`}>{children}</button>
);
const NewTag = () => <span className="absolute right-1.5 bottom-2 bg-[#3ddbd0] px-px text-[7px] leading-2 font-bold text-black">NEW</span>;

const Taskbar = () => (
  <footer className="relative mt-auto flex h-[47px] shrink-0 items-center border-t border-[#404040] bg-[#202020] text-white">
    <div className="mx-auto flex gap-1">
      <TaskItem label="Start"><svg viewBox="0 0 24 24" className="size-6"><path fill="#4cc2f5" d="M0 0h11.500v11.500H0zM12.500 0H24v11.500H12.500zM0 12.500h11.500V24H0zM12.500 12.500H24V24H12.500z" /></svg></TaskItem>
      <TaskItem label="Hledat"><Search className="size-6" strokeWidth={2} /></TaskItem>
      <TaskItem label="Zobrazení úloh"><svg viewBox="0 0 24 24" className="size-6"><path fill="#ddd" d="M7 1h17v16H7z" /><path fill="#777" d="M0 7h16v16H0z" /></svg></TaskItem>
      <TaskItem label="Teams"><TeamsIcon className="size-6" /><NewTag /></TaskItem>
      <TaskItem label="Outlook" active><OutlookIcon /><span className="absolute top-1 right-0.5 flex size-4 items-center justify-center rounded-full bg-[#ff99a4] text-[12px] font-bold text-black">!</span><span className="absolute bottom-0.5 h-[3px] w-4 rounded-full bg-[#4cc2ff]" /></TaskItem>
      <TaskItem label="Disketa"><svg viewBox="0 0 24 24" className="size-6"><path fill="#2444c0" d="M1 0h22v24H1z" /><path fill="#eee" d="M6 1h12v8H6z" /><path fill="#2444c0" d="M13 2h3v6h-3z" /><path fill="#f6e0e4" d="M4 12h16v11H4z" /><path stroke="#e07080" d="M4 15.500h16M4 18.500h16" /></svg></TaskItem>
      <TaskItem label="Kalkulačka"><svg viewBox="0 0 24 24" className="size-6"><path fill="#4a5663" d="M3 0h18v24H3z" /><path fill="#40c4e8" d="M5 2h14v4H5z" /><path fill="#b8c4d0" d="M5 8h4v4H5zM10 8h4v4h-4zM15 8h4v4h-4zM5 13h4v4H5zM10 13h4v4h-4zM5 18h4v4H5zM10 18h4v4h-4z" /><path fill="#1f8fe0" d="M15 13h4v9h-4z" /></svg></TaskItem>
      <TaskItem label="Typora"><span className="flex size-6 items-center justify-center rounded bg-[#fafafa] font-['Liberation_Serif',serif] text-[18px] font-bold text-[#333]">T</span></TaskItem>
      <TaskItem label="Chrome"><svg viewBox="0 0 24 24" className="size-6"><circle cx="12" cy="12" r="12" fill="#fbc116" /><path fill="#ea4335" d="M12 0a12 12 0 0 1 10.400 6H12a6 6 0 0 0-5.500 4L1.600 6A12 12 0 0 1 12 0z" /><path fill="#34a853" d="M1.600 6l5.200 9A6 6 0 0 0 12 18l-2 5.900A12 12 0 0 1 1.600 6z" /><circle cx="12" cy="12" r="6" fill="#fff" /><circle cx="12" cy="12" r="4.600" fill="#3a7df0" /></svg></TaskItem>
      <TaskItem label="Firefox"><span className="rounded-full bg-[#7a3df0]"><FaFirefoxBrowser className="size-6 text-[#ff8a1f]" /></span></TaskItem>
      <TaskItem label="Edge"><svg viewBox="0 0 24 24" className="size-6"><circle cx="12" cy="12" r="12" fill="#1488d8" /><path fill="#36c8b0" d="M1 9C4-3 24-2 24 10c0 4-4 6-8 5 2-3 0-7-5-7-4 0-8 2-10 5z" /><path fill="#0c4fa0" d="M8 13c0 6 6 10 13 7-8 8-21 1-19-8 1-3 6-4 8-3-2 1-2 2-2 4z" /></svg></TaskItem>
      <TaskItem label="Spotify"><span className="rounded-full bg-black"><FaSpotify className="size-6 text-[#1ed760]" /></span></TaskItem>
      <TaskItem label="To Do"><TodoIcon /></TaskItem>
      <TaskItem label="Outlook nový"><OutlookIcon /><NewTag /></TaskItem>
      <TaskItem label="PyCharm"><svg viewBox="0 0 24 24" className="size-6"><path fill="#21d789" d="M4 1l8-1 10 4-2 18-9 2-9-5z" /><path fill="#fcf84a" d="M14 16l8-4 1 8-6 4z" /><path fill="#07c3f2" d="M20 4l4 6-2 4z" /></svg><span className="absolute flex size-4 items-start bg-black pl-px text-[9px] leading-3 font-bold">PC</span></TaskItem>
    </div>
    <div className="absolute inset-y-0 right-5 flex items-center text-[11px]">
      <ChevronUp className="size-4" strokeWidth={2} /><span className="ml-5">CES</span><Globe className="ml-5 size-[17px]" strokeWidth={1.5} /><Volume2 className="ml-2 size-[18px]" strokeWidth={1.5} />
      <time className="ml-4 text-right leading-[17px]">10:12<br />13.06.2024</time><Bell className="ml-2 size-4 text-[#a0dcf5]" fill="#a0dcf5" />
    </div>
  </footer>
);

const Shortcut = () => <span className="absolute bottom-0 -left-px flex size-[13px] items-center justify-center bg-white"><Svg className="size-2.5 text-[#0078d4]"><path strokeWidth="2.500" d="M3 17L16 4M6 4h10v10" /></Svg></span>;
const desk = "absolute w-20 text-center text-[12px] leading-4 text-white";

const RightScreen = () => (
  <div className="min-w-0 flex-1 pb-[5px]">
    <div className="relative flex h-full flex-col overflow-hidden bg-black">
      <span className={`${desk} top-[170px] -left-0.5`}>Camera</span>
      <span className={`${desk} top-[268px] -left-0.5`}>DroidCam</span>
      <div className={`${desk} top-[302px] -left-0.5 flex flex-col items-center`}><span className="relative flex h-[46px] w-[48px] justify-end"><span className="flex w-9 items-end justify-center rounded-lg bg-[#9ac43c]"><span className="mb-1 h-2 w-6 rounded-full bg-white" /></span><Shortcut /></span><span className="mt-1">DroidCam...</span></div>
      <div className={`${desk} top-[400px] -left-0.5 flex flex-col items-center`}><span className="relative flex size-[46px] items-center justify-center rounded-full bg-linear-to-tr from-[#0a9cff] via-[#a24df5] to-[#ff6968]"><Svg className="size-[30px]"><path fill="#fff" stroke="none" d="M1 14l6-8 4 3 8-3-6 8-4-3z" /></Svg><Shortcut /></span><span className="mt-1">Messenger</span></div>
      <MessageWindow />
      <Reminders />
      <Taskbar />
      <div className="pointer-events-none absolute inset-0 bg-[rgba(162,162,162,0.494)]" />
    </div>
  </div>
);

export default function App() {
  return (
    <div className="flex h-screen w-full overflow-hidden bg-white font-['Open_Sans','Noto_Sans',sans-serif]">
      <LeftScreen />
      <RightScreen />
    </div>
  );
}
